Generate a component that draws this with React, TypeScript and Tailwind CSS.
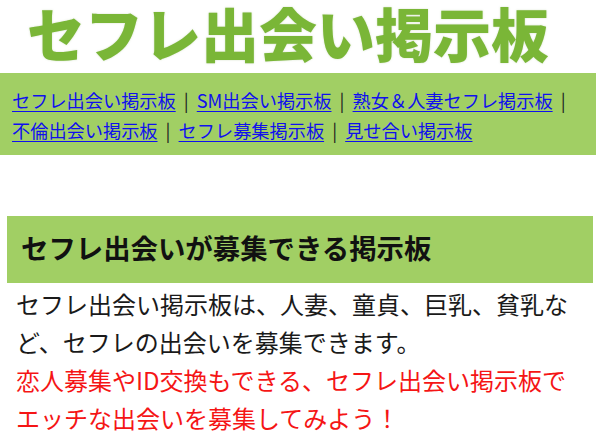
import React from "react";

const font = { fontFamily: '"Noto Sans CJK JP", "Noto Sans", sans-serif' };

const links = [
  "セフレ出会い掲示板",
  "SM出会い掲示板",
  "熟女＆人妻セフレ掲示板",
  "不倫出会い掲示板",
  "セフレ募集掲示板",
  "見せ合い掲示板",
];

export default function App() {
  return (
    <div className="w-[600px] h-[434px] overflow-hidden bg-white" style={font}>
      <div className="pl-[27px] pt-[2px] pb-[11px]">
        <div className="text-[58px] leading-[60px] font-black text-[#7ab637] tracking-[0px] [text-shadow:0_0_2px_rgba(120,160,80,0.35)] whitespace-nowrap">
          セフレ出会い掲示板
        </div>
      </div>
      <nav className="w-[596px] bg-[#a1cf64] pl-[12px] pr-[14px] pt-[12px] pb-[10px] text-[18.2px] leading-[30px] [word-spacing:4px]">
        {links.map((l, i) => (
          <React.Fragment key={l}>
            <a href="#" className="text-[#1010ee] underline underline-offset-[3px] decoration-1 [word-spacing:0]">
              {l}
            </a>
            {i < links.length - 1 && <span className="text-[#222]"> | </span>}
          </React.Fragment>
        ))}
      </nav>
      <div className="h-[61px]" />
      <h2 className="mx-[7px] w-[586px] h-[67px] bg-[#a1cf64] flex items-center pl-[14px] pb-[4px] text-[27.4px] font-bold text-[#111] leading-none">
        セフレ出会いが募集できる掲示板
      </h2>
      <div className="px-[16px] pt-[2px] text-[24px] leading-[38px] w-[600px]">
        <p className="text-[#1a1a1a]">セフレ出会い掲示板は、人妻、童貞、巨乳、貧乳など、セフレの出会いを募集できます。</p>
        <p className="text-[#f51515]">恋人募集やID交換もできる、セフレ出会い掲示板でエッチな出会いを募集してみよう！</p>
      </div>
    </div>
  );
}
